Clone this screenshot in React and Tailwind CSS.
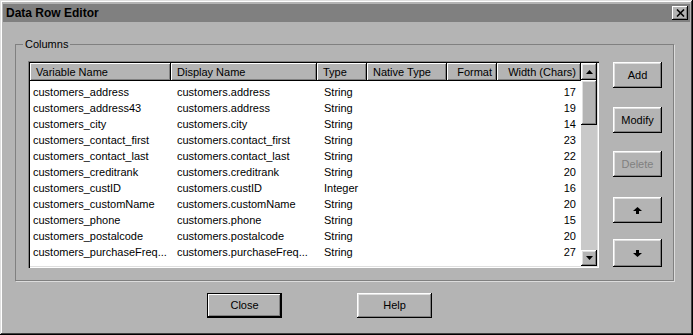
const rows = [
  ['customers_address', 'customers.address', 'String', 17],
  ['customers_address43', 'customers.address', 'String', 19],
  ['customers_city', 'customers.city', 'String', 14],
  ['customers_contact_first', 'customers.contact_first', 'String', 23],
  ['customers_contact_last', 'customers.contact_last', 'String', 22],
  ['customers_creditrank', 'customers.creditrank', 'String', 20],
  ['customers_custID', 'customers.custID', 'Integer', 16],
  ['customers_customName', 'customers.customName', 'String', 20],
  ['customers_phone', 'customers.phone', 'String', 15],
  ['customers_postalcode', 'customers.postalcode', 'String', 20],
  ['customers_purchaseFreq...', 'customers.purchaseFreq...', 'String', 27],
];

const raised =
  'shadow-[inset_-1px_-1px_0_#000,inset_1px_1px_0_#fff,inset_-2px_-2px_0_#808080,inset_2px_2px_0_#dfdfdf]';
const headCell =
  'h-[18px] flex items-center shrink-0 bg-[#b4b4b4] shadow-[inset_-1px_-1px_0_#000,inset_1px_1px_0_#fff,inset_-2px_-2px_0_#808080]';

const Arrow = ({ down }) => (
  <svg width="9" height="7" viewBox="0 0 9 7" className={down ? 'rotate-180' : ''}>
    <path d="M4.5 0 L9 4 L6 4 L6 7 L3 7 L3 4 L0 4 Z" fill="#000" />
  </svg>
);

const Tri = ({ down }) => (
  <svg width="7" height="4" viewBox="0 0 7 4" className={down ? 'rotate-180' : ''}>
    <path d="M3.5 0 L7 4 L0 4 Z" fill="#000" />
  </svg>
);

const SideButton = ({ children, disabled, className = '' }) => (
  <button
    className={`w-[49px] h-[26px] flex items-center justify-center bg-[#b4b4b4] ${raised} ${
      disabled ? 'text-[#808080]' : 'text-black'
    } ${className}`}
  >
    {children}
  </button>
);

export default function App() {
  return (
    <div className="w-[693px] h-[335px] bg-[#b4b4b4] p-[3px] pt-[4px] flex flex-col font-['Liberation_Sans',Arial,sans-serif] text-[11px] text-black shadow-[inset_-1px_-1px_0_#000,inset_1px_1px_0_#dfdfdf,inset_-2px_-2px_0_#404040,inset_2px_2px_0_#fff]">
      <div className="h-[18px] bg-[#808080] flex items-center justify-between pl-[3px] pr-[2px]">
        <span className="text-[12px] font-bold leading-none">Data Row Editor</span>
        <div className="w-[16px] h-[14px] bg-[#b4b4b4] flex items-center justify-center shadow-[inset_-1px_-1px_0_#000,inset_1px_1px_0_#fff,inset_-2px_-2px_0_#808080]">
          <svg width="9" height="8" viewBox="0 0 9 8">
            <path d="M1 0.5 L8 7.5 M8 0.5 L1 7.5" stroke="#000" strokeWidth="1.6" />
          </svg>
        </div>
      </div>

      <div className="pl-[12px] pt-[22px]">
        <div className="relative w-[659px] h-[237px] border border-[#808080] shadow-[1px_1px_0_#dcdcdc]">
          <span className="absolute -top-[7px] left-[7px] px-[2px] bg-[#b4b4b4] leading-[13px]">Columns</span>

          <div className="flex items-start pl-[12px] pt-[16px]">
            <div className="w-[571px] h-[207px] p-[2px] bg-white flex shadow-[inset_1px_1px_0_#808080,inset_2px_2px_0_#000,inset_-1px_-1px_0_#fff,inset_-2px_-2px_0_#dfdfdf]">
              <div className="w-[551px] flex flex-col">
                <div className="flex">
                  <div className={`${headCell} w-[141px] pl-[6px]`}>Variable Name</div>
                  <div className={`${headCell} w-[146px] pl-[6px]`}>Display Name</div>
                  <div className={`${headCell} w-[50px] pl-[6px]`}>Type</div>
                  <div className={`${headCell} w-[80px] pl-[6px]`}>Native Type</div>
                  <div className={`${headCell} w-[50px] justify-end pr-[5px]`}>Format</div>
                  <div className={`${headCell} w-[84px] justify-end pr-[5px]`}>Width (Chars)</div>
                </div>
                <div className="pt-[3px]">
                  {rows.map(([v, d, t, w]) => (
                    <div key={v} className="flex h-[16px] items-center whitespace-nowrap">
                      <div className="w-[141px] pl-[3px]">{v}</div>
                      <div className="w-[146px] pl-[6px]">{d}</div>
                      <div className="w-[50px] pl-[7px]">{t}</div>
                      <div className="w-[80px]"></div>
                      <div className="w-[50px]"></div>
                      <div className="w-[84px] text-right pr-[5px]">{w}</div>
                    </div>
                  ))}
                </div>
              </div>
              <div className="w-[16px] flex flex-col bg-[#c9c9c9]">
                <div className={`h-[17px] flex items-center justify-center bg-[#b4b4b4] ${raised}`}>
                  <Tri />
                </div>
                <div className={`h-[45px] bg-[#b4b4b4] ${raised}`}></div>
                <div className="flex-1"></div>
                <div className={`h-[16px] flex items-center justify-center bg-[#b4b4b4] ${raised}`}>
                  <Tri down />
                </div>
              </div>
            </div>

            <div className="ml-[14px] mt-[1px] flex flex-col">
              <SideButton>Add</SideButton>
              <SideButton className="mt-[19px]">Modify</SideButton>
              <SideButton disabled className="mt-[18px]">Delete</SideButton>
              <SideButton className="mt-[20px]">
                <Arrow />
              </SideButton>
              <SideButton className="mt-[16px] h-[28px]">
                <Arrow down />
              </SideButton>
            </div>
          </div>
        </div>
      </div>

      <div className="flex pl-[204px] pt-[12px] gap-[75px]">
        <button className="w-[75px] h-[25px] border border-black bg-[#b4b4b4] shadow-[inset_-1px_-1px_0_#000,inset_1px_1px_0_#fff,inset_-2px_-2px_0_#808080]">
          Close
        </button>
        <button className={`w-[75px] h-[25px] bg-[#b4b4b4] ${raised}`}>Help</button>
      </div>
    </div>
  );
}
